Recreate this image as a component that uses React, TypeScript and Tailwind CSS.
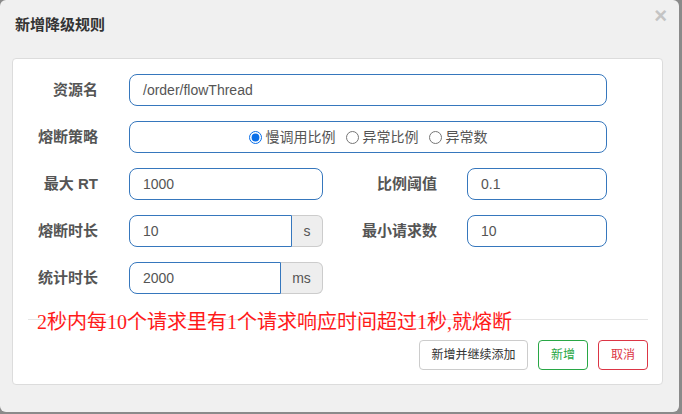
import React from 'react';

const SANS = { fontFamily: '"Liberation Sans", "Noto Sans CJK SC", sans-serif' };

function Label({ text, w }: { text: string; w: string }) {
  return (
    <label className={`${w} shrink-0 text-right text-[15px] font-bold text-[#555]`}>{text}</label>
  );
}

function TextInput({ value, w, rounded = 'rounded-[8px]' }: { value: string; w: string; rounded?: string }) {
  return (
    <div
      className={`${w} h-[32px] ${rounded} border border-[#3677bd] bg-white flex items-center pl-[13px] text-[14px] text-[#555]`}
    >
      {value}
    </div>
  );
}

function Addon({ text, w }: { text: string; w: string }) {
  return (
    <div
      className={`${w} h-[32px] rounded-r-[6px] border border-l-0 border-[#ccc] bg-[#eee] flex items-center justify-center text-[14px] text-[#555]`}
    >
      {text}
    </div>
  );
}

function Radio({ label, checked }: { label: string; checked?: boolean }) {
  return (
    <label className="flex items-center gap-[4px] text-[14px] text-[#555]">
      <input type="radio" name="grade" defaultChecked={checked} className="w-[13px] h-[13px] m-0 accent-[#0a6fe8]" />
      {label}
    </label>
  );
}

export default function App() {
  return (
    <div className="w-[682px] h-[414px] bg-[#8a8a8a]" style={SANS}>
      <div className="w-[679px] h-[412px] bg-[#f0f0f0] rounded-[6px] flex flex-col">
        {/* header */}
        <div className="h-[58px] flex items-start justify-between">
          <h4 className="mt-[15px] ml-[15px] text-[15px] leading-[20px] font-bold text-[#333]">新增降级规则</h4>
          <span className="mt-[3px] mr-[12px] text-[22px] leading-[26px] font-bold text-[#c4c4c4]">×</span>
        </div>

        {/* body panel */}
        <div className="ml-[12px] w-[651px] h-[327px] bg-white border border-[#dcdcdc] rounded-[4px] pt-[15px] flex flex-col">
          <div className="flex flex-col gap-[15px]">
            <div className="flex items-center h-[32px]">
              <Label text="资源名" w="w-[85px]" />
              <div className="ml-[31px]">
                <TextInput value="/order/flowThread" w="w-[478px]" />
              </div>
            </div>

            <div className="flex items-center h-[32px]">
              <Label text="熔断策略" w="w-[85px]" />
              <div className="ml-[31px] w-[478px] h-[32px] rounded-[8px] border border-[#3677bd] flex items-center justify-center gap-[10px]">
                <Radio label="慢调用比例" checked />
                <Radio label="异常比例" />
                <Radio label="异常数" />
              </div>
            </div>

            <div className="flex items-center h-[32px]">
              <Label text="最大 RT" w="w-[85px]" />
              <div className="ml-[31px]">
                <TextInput value="1000" w="w-[194px]" />
              </div>
              <Label text="比例阈值" w="w-[114px]" />
              <div className="ml-[30px]">
                <TextInput value="0.1" w="w-[140px]" />
              </div>
            </div>

            <div className="flex items-center h-[32px]">
              <Label text="熔断时长" w="w-[85px]" />
              <div className="ml-[31px] flex">
                <TextInput value="10" w="w-[163px]" rounded="rounded-l-[8px]" />
                <Addon text="s" w="w-[31px]" />
              </div>
              <Label text="最小请求数" w="w-[114px]" />
              <div className="ml-[30px]">
                <TextInput value="10" w="w-[140px]" />
              </div>
            </div>

            <div className="flex items-center h-[32px]">
              <Label text="统计时长" w="w-[85px]" />
              <div className="ml-[31px] flex">
                <TextInput value="2000" w="w-[152px]" rounded="rounded-l-[8px]" />
                <Addon text="ms" w="w-[42px]" />
              </div>
            </div>
          </div>

          {/* note + divider */}
          <p
            className="relative z-10 mt-[18px] ml-[24px] text-[20px] leading-[20px] text-[#ff1a1a]"
            style={{ fontFamily: '"Liberation Serif", "Noto Sans CJK SC", serif' }}
          >
            2秒内每10个请求里有1个请求响应时间超过1秒,就熔断
          </p>
          <div className="-mt-[13px] ml-[15px] mr-[14px] border-t border-[#e5e5e5]" />

          {/* footer buttons */}
          <div className="mt-[20px] mr-[14px] flex justify-end gap-[10px]">
            <button className="w-[109px] h-[30px] rounded-[4px] border border-[#ccc] bg-white text-[12px] text-[#333]">
              新增并继续添加
            </button>
            <button className="w-[50px] h-[30px] rounded-[4px] border border-[#28a745] bg-white text-[12px] text-[#28a745]">
              新增
            </button>
            <button className="w-[50px] h-[30px] rounded-[4px] border border-[#dc3545] bg-white text-[12px] text-[#dc3545]">
              取消
            </button>
          </div>
        </div>
      </div>
    </div>
  );
}
